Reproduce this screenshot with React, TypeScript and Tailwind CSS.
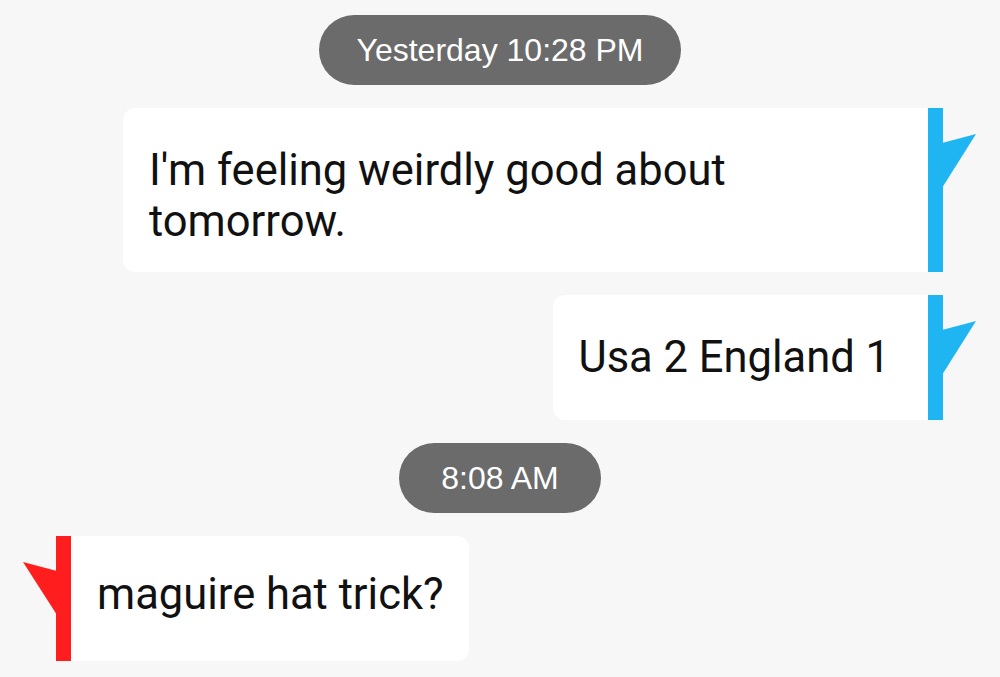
import React from "react";

function RightTail() {
  return (
    <svg width="34" height="60" viewBox="0 0 34 60" className="mt-[26px] -ml-px shrink-0">
      <polygon points="0,9 34,0 0,54" fill="#1fb5f3" />
    </svg>
  );
}

function LeftTail() {
  return (
    <svg width="34" height="60" viewBox="0 0 34 60" className="mt-[26px] -mr-px shrink-0">
      <polygon points="34,9 0,0 34,53" fill="#ff1d1d" />
    </svg>
  );
}

function Stamp({ text, w }: { text: string; w: string }) {
  return (
    <div className="flex justify-center">
      <div
        className={`h-[70px] ${w} rounded-full bg-[#6b6b6b] text-white flex items-center justify-center text-[32px]`}
        style={{ fontFamily: '"Liberation Sans", Arial, sans-serif' }}
      >
        {text}
      </div>
    </div>
  );
}

export default function App() {
  const msgFont = { fontFamily: 'Roboto, "Noto Sans", sans-serif' };
  return (
    <div className="w-[1000px] h-[677px] bg-[#f7f7f7] overflow-hidden flex flex-col pt-[15px] gap-[23px]" style={msgFont}>
      <Stamp text="Yesterday 10:28 PM" w="w-[362px]" />
      <div className="flex justify-end pr-[24px]">
        <div className="w-[805px] h-[164px] bg-white rounded-l-[12px] pl-[26px] pr-[60px] pt-[37px] text-[43.5px] leading-[51px] text-[#111]">
          I'm feeling weirdly good about tomorrow.
        </div>
        <div className="w-[15px] bg-[#1fb5f3]" />
        <RightTail />
      </div>
      <div className="flex justify-end pr-[24px]">
        <div className="h-[125px] bg-white rounded-l-[12px] pl-[25px] pr-[38px] pt-[37px] text-[43.5px] leading-[51px] text-[#111]">
          Usa 2 England 1
        </div>
        <div className="w-[15px] bg-[#1fb5f3]" />
        <RightTail />
      </div>
      <Stamp text="8:08 AM" w="w-[202px]" />
      <div className="flex justify-start pl-[23px]">
        <LeftTail />
        <div className="w-[15px] bg-[#ff1d1d]" />
        <div className="h-[125px] bg-white rounded-r-[12px] pl-[26px] pr-[25px] pt-[33px] text-[43.5px] leading-[51px] text-[#111]">
          maguire hat trick?
        </div>
      </div>
    </div>
  );
}
